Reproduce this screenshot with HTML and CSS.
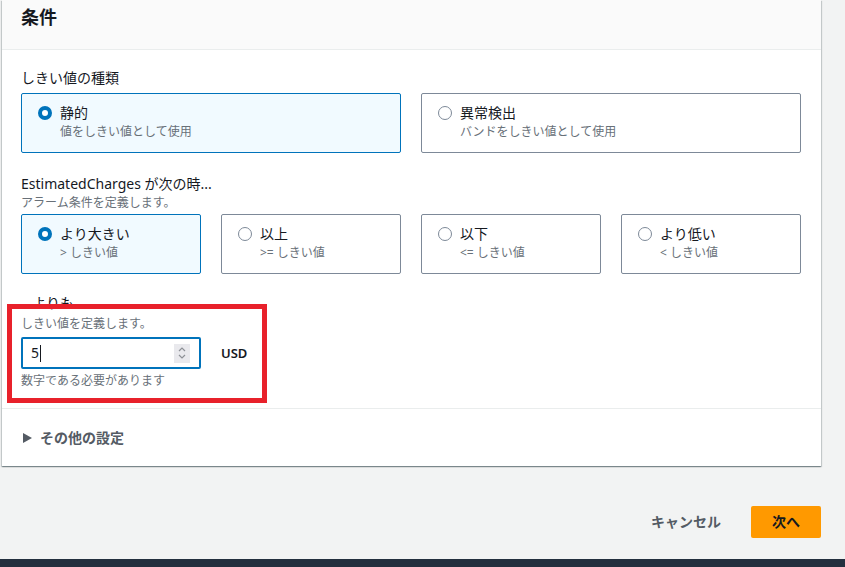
FILE: index.html
```html
<!DOCTYPE html>
<html lang="ja">
<head>
  <meta charset="UTF-8">
  <title>条件</title>
  <link rel="stylesheet" href="styles.css">
</head>
<body>

<div class="card">
  <div class="card-header">
    <h2>条件</h2>
  </div>

  <div class="card-body">
    <div class="field">
      <div class="field-label">しきい値の種類</div>
      <div class="tiles tiles-2">
        <div class="tile selected">
          <span class="radio on"></span>
          <div>
            <div class="tile-title">静的</div>
            <div class="tile-desc">値をしきい値として使用</div>
          </div>
        </div>
        <div class="tile">
          <span class="radio"></span>
          <div>
            <div class="tile-title">異常検出</div>
            <div class="tile-desc">バンドをしきい値として使用</div>
          </div>
        </div>
      </div>
    </div>

    <div class="field">
      <div class="field-label">EstimatedCharges が次の時...</div>
      <div class="field-desc">アラーム条件を定義します。</div>
      <div class="tiles tiles-4">
        <div class="tile selected">
          <span class="radio on"></span>
          <div>
            <div class="tile-title">より大きい</div>
            <div class="tile-desc">&gt; しきい値</div>
          </div>
        </div>
        <div class="tile">
          <span class="radio"></span>
          <div>
            <div class="tile-title">以上</div>
            <div class="tile-desc">&gt;= しきい値</div>
          </div>
        </div>
        <div class="tile">
          <span class="radio"></span>
          <div>
            <div class="tile-title">以下</div>
            <div class="tile-desc">&lt;= しきい値</div>
          </div>
        </div>
        <div class="tile">
          <span class="radio"></span>
          <div>
            <div class="tile-title">より低い</div>
            <div class="tile-desc">&lt; しきい値</div>
          </div>
        </div>
      </div>
    </div>

    <div class="field threshold">
      <div class="field-label">...よりも</div>
      <div class="field-desc desc-tall">しきい値を定義します。</div>
      <div class="input-row">
        <div class="num-input">
          <span class="value">5</span><span class="caret"></span>
          <span class="spinner">
            <svg width="10" height="16" viewBox="0 0 10 16">
              <path d="M2 6 L5 3 L8 6" fill="none" stroke="#8d9096" stroke-width="1.2"/>
              <path d="M2 10 L5 13 L8 10" fill="none" stroke="#8d9096" stroke-width="1.2"/>
            </svg>
          </span>
        </div>
        <span class="unit">USD</span>
      </div>
      <div class="field-desc constraint">数字である必要があります</div>
      <div class="highlight"></div>
    </div>
  </div>

  <div class="expander">
    <span class="caret-right"></span>
    <span>その他の設定</span>
  </div>
</div>

<div class="actions">
  <span class="link-btn">キャンセル</span>
  <span class="primary-btn">次へ</span>
</div>

<div class="bottom-bar"></div>

</body>
</html>
```

FILE: styles.css
```css
body {
  margin: 0;
  background-color: #f2f3f3;
  font-family: "Noto Sans", "Noto Sans CJK JP", sans-serif;
  color: #16191f;
  font-size: 14px;
  line-height: 20px;
}
.card {
  margin-left: 2px;
  width: 819px;
  background: white;
  box-shadow: 0 1px 1px 0 rgba(0,28,36,0.3), 1px 1px 1px 0 rgba(0,28,36,0.15), -1px 1px 1px 0 rgba(0,28,36,0.15);
}
.card-header {
  height: 50px;
  padding: 0 19px;
  background: #fafafa;
  border-bottom: 1px solid #eaeded;
  box-sizing: border-box;
}
.card-header h2 {
  margin: 0;
  padding-top: 6px;
  font-size: 18px;
  line-height: 22px;
  font-weight: 700;
}
.card-body {
  padding: 18px 20px 18px 19px;
  border-bottom: 1px solid #eaeded;
}
.field + .field {
  margin-top: 21px;
}
.field-label {
  font-size: 14px;
  line-height: 20px;
}
.field-desc {
  font-size: 12px;
  line-height: 18px;
  color: #687078;
}
.desc-tall {
  line-height: 22px;
}
.tiles {
  display: grid;
  gap: 20px;
  margin-top: 5px;
}
.field-desc + .tiles {
  margin-top: 2px;
}
.tiles-2 {
  grid-template-columns: 1fr 1fr;
}
.tiles-4 {
  grid-template-columns: repeat(4, 1fr);
}
.tile {
  display: flex;
  gap: 8px;
  height: 60px;
  box-sizing: border-box;
  padding: 9px 16px 0 16px;
  border: 1px solid #7d8998;
  border-radius: 2px;
}
.tile.selected {
  background: #f1faff;
  border-color: #0073bb;
}
.radio {
  flex: none;
  width: 14px;
  height: 14px;
  margin-top: 3px;
  box-sizing: border-box;
  border: 1.5px solid #7d8998;
  border-radius: 50%;
  background: white;
}
.radio.on {
  border: 4px solid #0073bb;
}
.tile-title {
  font-size: 14px;
  line-height: 20px;
}
.tile-desc {
  font-size: 12px;
  line-height: 18px;
  color: #687078;
}
.threshold {
  position: relative;
  margin-top: 19px !important;
}
.input-row {
  display: flex;
  align-items: center;
  gap: 20px;
  margin-top: 2px;
}
.num-input {
  display: flex;
  align-items: center;
  width: 180px;
  height: 32px;
  box-sizing: border-box;
  padding: 0 9px 0 8px;
  border: 2px solid #0073bb;
  border-radius: 2px;
}
.value {
  font-size: 14px;
}
.caret {
  width: 1px;
  height: 17px;
  margin-left: 1px;
  background: #16191f;
}
.spinner {
  margin-left: auto;
  width: 16px;
  height: 19px;
  display: flex;
  align-items: center;
  justify-content: center;
  background: #e9e9ed;
}
.unit {
  font-size: 13px;
  font-weight: 600;
}
.constraint {
  margin-top: 3px;
}
.highlight {
  position: absolute;
  left: -14px;
  top: 11px;
  width: 260px;
  height: 99px;
  box-sizing: border-box;
  border: 5px solid #e8212b;
}
.expander {
  display: flex;
  align-items: center;
  gap: 8px;
  height: 57px;
  padding-left: 21px;
  font-weight: 700;
  color: #545b64;
}
.caret-right {
  width: 0;
  height: 0;
  border-top: 5px solid transparent;
  border-bottom: 5px solid transparent;
  border-left: 9px solid #545b64;
}
.actions {
  display: flex;
  justify-content: flex-end;
  align-items: center;
  gap: 30px;
  width: 821px;
  margin-top: 40px;
}
.link-btn {
  font-weight: 700;
  color: #545b64;
}
.primary-btn {
  width: 70px;
  height: 32px;
  line-height: 32px;
  text-align: center;
  font-weight: 700;
  background: #ff9900;
  border-radius: 2px;
  color: #16191f;
}
.bottom-bar {
  height: 8px;
  margin-top: 21px;
  background: #232f3e;
}
```
